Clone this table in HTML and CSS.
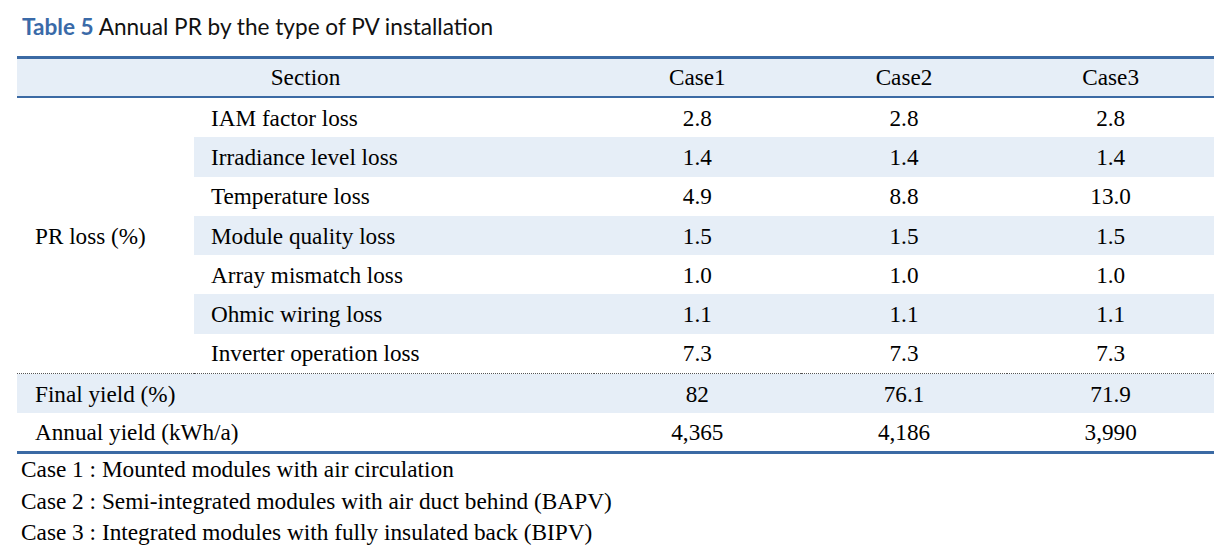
FILE: index.html
```html
<!DOCTYPE html>
<html lang="en">
<head>
<meta charset="utf-8">
<title>Table 5</title>
<link rel="stylesheet" href="styles.css">
</head>
<body>
<div class="page">
  <h1 class="caption"><span class="label">Table 5</span> Annual PR by the type of PV installation</h1>
  <table class="pr">
    <colgroup>
      <col class="c-group">
      <col class="c-item">
      <col class="c-case">
      <col class="c-case">
      <col class="c-case">
    </colgroup>
    <thead>
      <tr><th colspan="2">Section</th><th>Case1</th><th>Case2</th><th>Case3</th></tr>
    </thead>
    <tbody>
      <tr><td class="group" rowspan="7">PR loss (%)</td><td class="item">IAM factor loss</td><td>2.8</td><td>2.8</td><td>2.8</td></tr>
      <tr class="alt"><td class="item">Irradiance level loss</td><td>1.4</td><td>1.4</td><td>1.4</td></tr>
      <tr><td class="item">Temperature loss</td><td>4.9</td><td>8.8</td><td>13.0</td></tr>
      <tr class="alt"><td class="item">Module quality loss</td><td>1.5</td><td>1.5</td><td>1.5</td></tr>
      <tr><td class="item">Array mismatch loss</td><td>1.0</td><td>1.0</td><td>1.0</td></tr>
      <tr class="alt"><td class="item">Ohmic wiring loss</td><td>1.1</td><td>1.1</td><td>1.1</td></tr>
      <tr><td class="item">Inverter operation loss</td><td>7.3</td><td>7.3</td><td>7.3</td></tr>
      <tr class="alt final"><td class="group" colspan="2">Final yield (%)</td><td>82</td><td>76.1</td><td>71.9</td></tr>
      <tr class="last"><td class="group" colspan="2">Annual yield (kWh/a)</td><td>4,365</td><td>4,186</td><td>3,990</td></tr>
    </tbody>
  </table>
  <ul class="notes">
    <li>Case 1 : Mounted modules with air circulation</li>
    <li>Case 2 : Semi-integrated modules with air duct behind (BAPV)</li>
    <li>Case 3 : Integrated modules with fully insulated back (BIPV)</li>
  </ul>
</div>
</body>
</html>
```

FILE: styles.css
```css
html, body {
  margin: 0;
  padding: 0;
  background: #ffffff;
}

.page {
  padding: 13px 5px 0 17px;
  color: #000000;
}

.caption {
  margin: 0 0 16px 5px;
  font-family: Lato, "Noto Sans", sans-serif;
  font-weight: 400;
  font-size: 22.6px;
  line-height: 27px;
  color: #111111;
}

.caption .label {
  font-weight: 700;
  color: #3a6aa8;
}

.pr {
  width: 1197px;
  border-collapse: collapse;
  table-layout: fixed;
  font-family: "Liberation Serif", "Times New Roman", serif;
  font-size: 23.2px;
  color: #000000;
}

.c-group { width: 177px; }
.c-item { width: 400px; }
.c-case { width: 206.67px; }

.pr th {
  font-weight: 400;
  height: 37px;
  padding: 0;
  text-align: center;
  background: #e6eef7;
  border-top: 3px solid #3b6aa4;
  border-bottom: 2px solid #3b6aa4;
}

.pr td {
  height: 39.3px;
  padding: 0;
  text-align: center;
  vertical-align: middle;
  line-height: 26px;
}

.pr td.item {
  text-align: left;
  padding-left: 17px;
}

.pr td.group {
  text-align: left;
  padding-left: 18px;
  background: #ffffff;
}

.pr tr.alt td {
  background: #e6eef7;
}

.pr tr.final td {
  border-top: 1px dotted #555555;
}

.pr tr.last td {
  border-bottom: 3px solid #3b6aa4;
  height: 38px;
}

.notes {
  list-style: none;
  margin: 0;
  padding: 0 0 0 4px;
  font-family: "Liberation Serif", "Times New Roman", serif;
  font-size: 23.3px;
  line-height: 31.5px;
}
```
